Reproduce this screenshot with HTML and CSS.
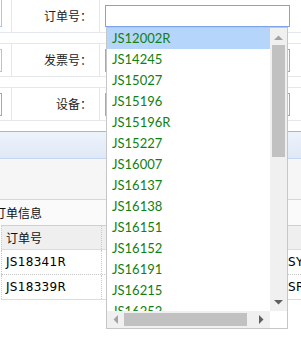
FILE: index.html
```html
<!DOCTYPE html>
<html>
<head>
<meta charset="utf-8">
<link rel="stylesheet" href="styles.css">
</head>
<body>
<div class="page">
  <div class="form">
    <div class="frow r1">
      <div class="c0"><span class="inp blue tall"></span></div>
      <div class="lab">订单号：</div>
      <div class="c2"><span class="inp focus"></span></div>
    </div>
    <div class="frow">
      <div class="c0"><span class="inp blue"></span></div>
      <div class="lab">发票号：</div>
      <div class="c2"><span class="inp gray"></span></div>
    </div>
    <div class="frow">
      <div class="c0"><span class="inp gray"></span></div>
      <div class="lab">设备：</div>
      <div class="c2"><span class="inp gray"></span></div>
    </div>
  </div>
  <div class="band"></div>
  <div class="toolbar"></div>
  <div class="panel">
    <div class="ptitle">订单信息</div>
    <div class="grid">
      <div class="grow head"><div class="g1">订单号</div><div class="g2"></div><div class="g3"></div></div>
      <div class="grow"><div class="g1">JS18341R</div><div class="g2"></div><div class="g3">SY</div></div>
      <div class="grow last"><div class="g1">JS18339R</div><div class="g2"></div><div class="g3">SR</div></div>
    </div>
  </div>

  <div class="dropdown">
    <div class="list">
      <div class="item sel">JS12002R</div>
      <div class="item">JS14245</div>
      <div class="item">JS15027</div>
      <div class="item">JS15196</div>
      <div class="item">JS15196R</div>
      <div class="item">JS15227</div>
      <div class="item">JS16007</div>
      <div class="item">JS16137</div>
      <div class="item">JS16138</div>
      <div class="item">JS16151</div>
      <div class="item">JS16152</div>
      <div class="item">JS16191</div>
      <div class="item">JS16215</div>
      <div class="item">JS16252</div>
    </div>
    <div class="vbar">
      <svg class="arr up" width="9" height="5" viewBox="0 0 9 5"><path d="M0 5 L4.5 0.5 L9 5 Z" fill="#a3a3a3"/></svg>
      <div class="vthumb"></div>
      <svg class="arr down" width="9" height="5" viewBox="0 0 9 5"><path d="M0 0 L9 0 L4.5 4.5 Z" fill="#606060"/></svg>
    </div>
    <div class="hbar">
      <svg class="arr left" width="5" height="9" viewBox="0 0 5 9"><path d="M5 0 L0.5 4.5 L5 9 Z" fill="#a3a3a3"/></svg>
      <div class="hthumb"></div>
      <svg class="arr right" width="5" height="9" viewBox="0 0 5 9"><path d="M0 0 L4.5 4.5 L0 9 Z" fill="#606060"/></svg>
    </div>
    <div class="corner"></div>
  </div>
</div>
</body>
</html>
```

FILE: styles.css
```css
html, body {
  margin: 0;
  padding: 0;
  background: #fff;
}
body {
  width: 301px;
  height: 338px;
  overflow: hidden;
  font-family: "DejaVu Sans", "Noto Sans CJK SC", sans-serif;
  font-size: 12px;
  color: #000;
}
.page {
  position: relative;
  width: 301px;
  height: 338px;
  overflow: hidden;
}

/* form */
.form {
  margin-top: -1px;
  margin-left: -100px;
  width: 420px;
  display: flex;
  flex-direction: column;
  gap: 10px;
}
.frow {
  display: flex;
  height: 32px;
  border-top: 1px solid #e4e7ec;
  border-bottom: 1px solid #e4e7ec;
}
.c0 {
  width: 112px;
  border-right: 1px solid #e4e7ec;
  display: flex;
  justify-content: flex-end;
  align-items: center;
  padding-right: 9px;
  box-sizing: border-box;
  flex: none;
}
.lab {
  width: 88px;
  box-sizing: border-box;
  border-right: 1px solid #e4e7ec;
  text-align: right;
  padding-right: 7px;
  line-height: 32px;
  font-family: "Noto Sans CJK SC", sans-serif;
  font-size: 12px;
  color: #222;
  flex: none;
}
.c2 {
  flex: 1;
  padding-left: 5px;
  display: flex;
  align-items: center;
}
.inp {
  display: block;
  width: 185px;
  height: 23px;
  box-sizing: border-box;
  background: #fff;
  flex: none;
}
.blue { border: 1px solid #a8c5ef; }
.gray { border: 1px solid #a9a9a9; }
.tall { height: 28px; align-self: flex-start; margin-top: -1px; }
.focus {
  border: 1px solid #7ea3e6;
  height: 22px;
  align-self: flex-start;
  margin-top: 5px;
}
.r1 .c0 { align-items: flex-start; }

/* band */
.band {
  margin-top: 10px;
  height: 26px;
  border-top: 1px solid #99bbe8;
  border-bottom: 1px solid #c5d6ee;
  background: linear-gradient(#eef3fb, #dfe8f6);
}
.toolbar {
  height: 40px;
  background: #f6f6f6;
  border-bottom: 1px solid #d6d6d6;
}

/* panel */
.panel {
  background: #fff;
}
.ptitle {
  height: 25px;
  line-height: 26px;
  margin-left: -6px;
  font-family: "Noto Sans CJK SC", sans-serif;
  font-size: 12px;
  color: #111;
  background: #fafafa;
}
.grid {
  margin-left: 1px;
  border-top: 1px solid #cfcfcf;
  border-bottom: 1px solid #dcdcdc;
  width: 340px;
}
.grow {
  display: flex;
  height: 24px;
  border-bottom: 1px dotted #c8c8c8;
  line-height: 24px;
  letter-spacing: 0.3px;
}
.grow.last { border-bottom: none; }
.grow.head {
  height: 23px;
  line-height: 23px;
  background: #efefef;
  border-bottom: 1px solid #dcdcdc;
  font-family: "Noto Sans CJK SC", sans-serif;
  color: #111;
  letter-spacing: 0;
}
.g1 {
  width: 101px;
  box-sizing: border-box;
  border-left: 1px dotted #c8c8c8;
  border-right: 1px dotted #c8c8c8;
  padding-left: 4px;
  flex: none;
}
.g2 {
  width: 180px;
  border-right: 1px dotted #c8c8c8;
  flex: none;
}
.g3 {
  padding-left: 5px;
  flex: 1;
}

/* dropdown */
.dropdown {
  position: absolute;
  left: 106px;
  top: 27px;
  width: 182px;
  height: 302px;
  box-sizing: border-box;
  border: 1px solid #c6c6c6;
  background: #fff;
  overflow: hidden;
  font-family: "Lato", sans-serif;
  font-size: 13px;
}
.list {
  position: absolute;
  left: 0;
  top: 0;
  width: 163px;
  height: 283px;
  overflow: hidden;
}
.item {
  height: 21px;
  line-height: 21px;
  padding-left: 5px;
  color: #108010;
  white-space: nowrap;
}
.item.sel {
  background: #b6d5fb;
}
.vbar {
  position: absolute;
  left: 163px;
  top: 0;
  width: 17px;
  height: 283px;
  background: #f0f0f0;
}
.vthumb {
  position: absolute;
  left: 2px;
  top: 17px;
  width: 13px;
  height: 112px;
  background: #c1c1c1;
}
.arr { position: absolute; display: block; }
.arr.up { left: 4px; top: 7px; }
.arr.down { left: 4px; bottom: 6px; }
.hbar {
  position: absolute;
  left: 0;
  top: 283px;
  width: 163px;
  height: 17px;
  background: #f0f0f0;
}
.hthumb {
  position: absolute;
  left: 17px;
  top: 2px;
  width: 123px;
  height: 13px;
  background: #c1c1c1;
}
.arr.left { left: 6px; top: 4px; }
.arr.right { right: 6px; top: 4px; }
.corner {
  position: absolute;
  left: 163px;
  top: 283px;
  width: 17px;
  height: 17px;
  background: #fff;
}
```
